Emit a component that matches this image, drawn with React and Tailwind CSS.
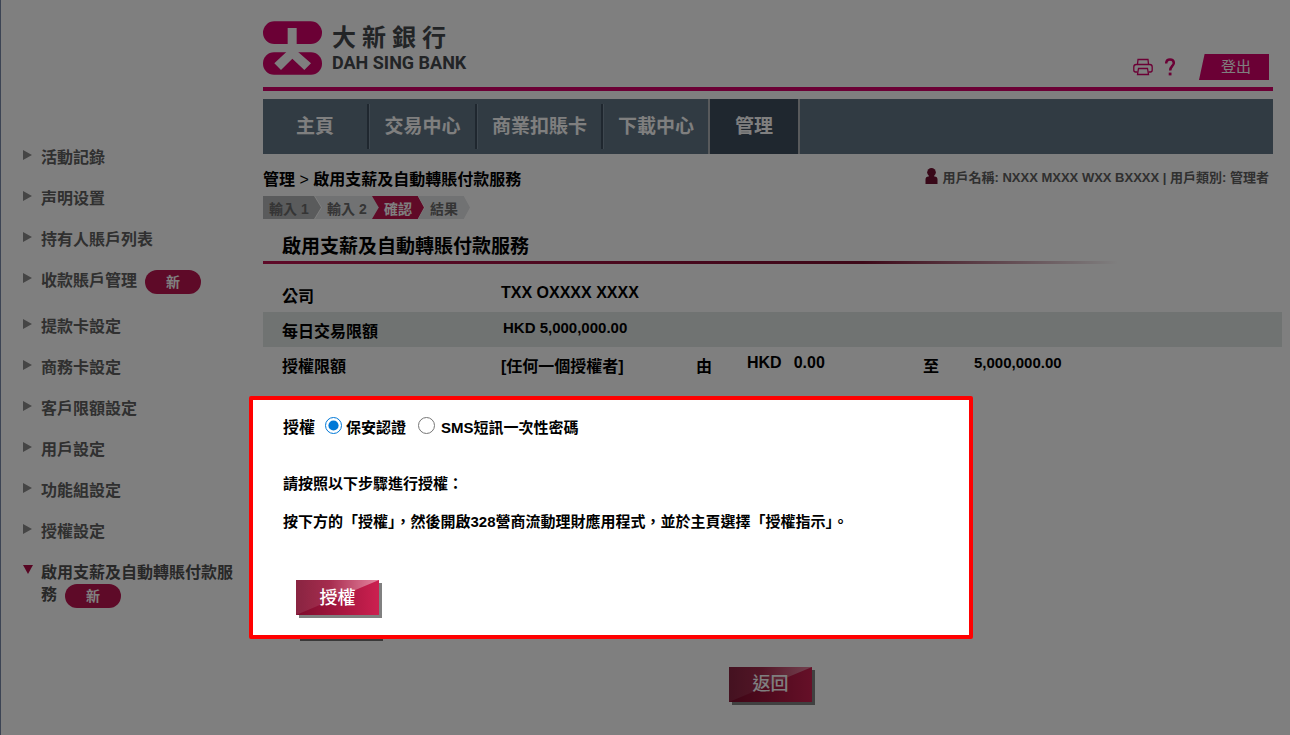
import React, { useState } from "react";
import clsx from "clsx";

const sideItems = [
  { label: "活動記錄" },
  { label: "声明设置" },
  { label: "持有人賬戶列表" },
  { label: "收款賬戶管理", isNew: true },
  { label: "提款卡設定" },
  { label: "商務卡設定" },
  { label: "客戶限額設定" },
  { label: "用戶設定" },
  { label: "功能組設定" },
  { label: "授權設定" },
  { label: "啟用支薪及自動轉賬付款服務", isNew: true, active: true },
];

const navItems = [
  { label: "主頁", width: "w-[107px]" },
  { label: "交易中心", width: "w-[108px]" },
  { label: "商業扣賬卡", width: "w-[126px]" },
  { label: "下載中心", width: "w-[104px]" },
  { label: "管理", width: "w-[88px]", active: true },
];

// ─── Logo ────────────────────────────────────────────────────────────────────
function Logo() {
  return (
    <div className="flex items-center gap-2.5 mb-[5px]">
      <svg viewBox="0 0 177 160" className="w-[59px] h-[54px]" aria-hidden="true">
        <rect width="177" height="68" rx="34" fill="#d6006a" />
        <rect y="93" width="177" height="67" rx="33" fill="#d6006a" />
        <path
          d="M74 20h27v68l43 38-20 20-36-34-34 34-20-20 40-38z"
          fill="#fff"
        />
      </svg>
      <div className="text-[#45484d]">
        <div className="flex gap-1.5 mt-0.5 text-[24px] leading-[28px] font-bold">
          <span>大</span>
          <span>新</span>
          <span>銀</span>
          <span>行</span>
        </div>
        <div className="font-[Roboto] font-bold text-[18px] leading-[22px]">
          DAH SING BANK
        </div>
      </div>
    </div>
  );
}

// ─── Header tools ────────────────────────────────────────────────────────────
function HeaderTools() {
  return (
    <div className="flex items-center mr-1">
      <button type="button" aria-label="列印" className="mr-3">
        <svg
          viewBox="0 0 20 18"
          className="w-5 h-[18px]"
          fill="none"
          stroke="#d6006a"
          strokeWidth="1.3"
        >
          <path d="M4.5 6.5 5 1.5h10l.5 5" />
          <path d="M4.5 14H2.6C1.500 14 .8 13.300.8 12V9c0-1.500.9-2.500 2.400-2.500h13.600c1.500 0 2.400 1 2.400 2.500v3c0 1.300-.7 2-1.800 2h-1.900" />
          <path d="M5.500 10.500h9l1 6h-11z" />
        </svg>
      </button>
      <button type="button" aria-label="說明" className="mr-6">
        <svg viewBox="0 0 10 18" className="w-2.5 h-[18px]" fill="none">
          <path
            d="M1.200 5.500C1.200 2.800 2.700 1.500 5 1.500S8.800 2.900 8.800 5C8.800 7.800 5.200 8.200 5.200 12.500"
            stroke="#d6006a"
            strokeWidth="2.500"
          />
          <rect x="3.700" y="14.600" width="2.800" height="2.800" fill="#d6006a" />
        </svg>
      </button>
      <button
        type="button"
        className="w-[70px] h-[26px] bg-[#d6006a] text-white text-[15px] leading-[26px] pl-1 [clip-path:polygon(8%_0,100%_0,100%_100%,0_100%)]"
      >
        登出
      </button>
    </div>
  );
}

// ─── Side menu ───────────────────────────────────────────────────────────────
function NewBadge() {
  return (
    <span className="inline-flex items-center justify-center w-14 h-6 -my-1 ml-2 align-middle rounded-full bg-[#bc1450] text-white text-[14px] leading-4">
      新
    </span>
  );
}

function SideMenu() {
  return (
    <aside className="w-[249px] shrink-0 border-l border-[#7888a8] pt-[147px] pl-[22px] pr-2.5">
      <ul className="flex flex-col gap-[19px]">
        {sideItems.map((item) => (
          <li
            key={item.label}
            className={clsx(
              "flex gap-2",
              item.isNew && !item.active && "mb-[5px]",
            )}
          >
            <svg viewBox="0 0 10 10" className="w-2.5 h-2.5 mt-[3px] shrink-0" aria-hidden="true">
              {item.active ? (
                <path d="M0 0h10L5 9z" fill="#b00c46" />
              ) : (
                <path d="M0 0v10l9-5z" fill="#8a8a8a" />
              )}
            </svg>
            <a
              href="#"
              className={clsx(
                "leading-[22px] text-base font-bold",
                item.active ? "text-[#505050]" : "text-[#606060]",
              )}
            >
              {item.label}
              {item.isNew && <NewBadge />}
            </a>
          </li>
        ))}
      </ul>
    </aside>
  );
}

// ─── Top navigation ──────────────────────────────────────────────────────────
function TopNav() {
  return (
    <nav className="flex items-stretch h-[55px] mt-2 bg-[#627686]">
      {navItems.map((item, i) => (
        <div
          key={item.label}
          className={clsx(
            "flex items-center justify-center",
            item.width,
            item.active && "bg-[#3e4e5e] border-x-2 border-[#b0b4b8] box-content",
          )}
        >
          <a href="#" className="flex-1 text-center text-[19px] leading-[28px] font-bold text-white">
            {item.label}
          </a>
          {i < 3 && (
            <span className="w-[3px] h-[45px] bg-[#3e4e5e] border-r border-[#7c8e9e]" />
          )}
        </div>
      ))}
    </nav>
  );
}

// ─── Progress steps ──────────────────────────────────────────────────────────
function Steps() {
  return (
    <ol className="flex h-[23px] mt-1 text-[14px] leading-[26px] font-bold text-[#6a6a6a]">
      <li className="relative z-1 w-[58px] pl-1.5 bg-[#b4b6b8] [clip-path:polygon(0_0,88%_0,100%_50%,88%_100%,0_100%)]">
        輸入 1
      </li>
      <li className="w-[63px] -ml-1.5 pl-3 bg-[#e2e4e6] [clip-path:polygon(0_0,100%_0,100%_100%,0_100%,11%_50%)]">
        輸入 2
      </li>
      <li className="w-[52px] -ml-1.5 pl-3 bg-[#c0144e] text-white [clip-path:polygon(0_0,88%_0,100%_50%,88%_100%,0_100%,13%_50%)]">
        確認
      </li>
      <li className="w-[52px] -ml-1.5 pl-3 bg-[#e2e4e6] [clip-path:polygon(0_0,88%_0,100%_50%,88%_100%,0_100%,13%_50%)]">
        結果
      </li>
    </ol>
  );
}

// ─── Details table ───────────────────────────────────────────────────────────
function DetailsTable() {
  const labelCell = "pl-[19px] pt-1 text-left align-middle font-bold text-base leading-[22px]";
  const textCell = "pt-1 align-middle text-base leading-[22px]";
  const valueCell = "pb-1 align-middle text-[15px] leading-[22px]";

  return (
    <table className="mt-[13px] w-full table-fixed border-collapse font-bold text-black">
      <colgroup>
        <col className="w-[238px]" />
        <col className="w-[195px]" />
        <col className="w-[51px]" />
        <col className="w-[176px]" />
        <col className="w-[51px]" />
        <col />
      </colgroup>
      <tbody>
        <tr className="h-[35px]">
          <th scope="row" className={labelCell}>公司</th>
          <td className="pb-1 align-middle text-base leading-[22px]" colSpan={5}>
            TXX OXXXX XXXX
          </td>
        </tr>
        <tr className="h-[35px] bg-[#e0e6e4]">
          <th scope="row" className={labelCell}>每日交易限額</th>
          <td className={clsx(valueCell, "pl-0.5")} colSpan={5}>HKD 5,000,000.00</td>
        </tr>
        <tr className="h-[35px]">
          <th scope="row" className={labelCell}>授權限額</th>
          <td className={textCell}>[任何一個授權者]</td>
          <td className={textCell}>由</td>
          <td className="pb-1 align-middle text-base leading-[22px]">
            <span className="mr-3">HKD</span>
            <span>0.00</span>
          </td>
          <td className={textCell}>至</td>
          <td className={valueCell}>5,000,000.00</td>
        </tr>
      </tbody>
    </table>
  );
}

function GlossButton({ children, className }) {
  return (
    <button
      type="button"
      className={clsx(
        "relative w-[83px] h-[35px] text-white text-[18px] font-medium bg-linear-to-r from-[#7c0c2c] to-[#cc2050] shadow-[3px_3px_0_#808080]",
        "before:absolute before:inset-0 before:bg-linear-to-r before:from-white/10 before:from-40% before:to-white/45 before:[clip-path:polygon(0_0,100%_0,0_100%)]",
        className,
      )}
    >
      <span className="relative">{children}</span>
    </button>
  );
}

// ─── Authorisation panel (stays above the dimmed page) ───────────────────────
function AuthPanel() {
  const [method, setMethod] = useState("token");

  return (
    <section className="relative z-20 max-w-[724px] mt-3.5 px-[30px] pt-4 pb-5 rounded-xs border-4 border-[#ff0000] bg-white text-black font-bold text-[15px] leading-6">
      <fieldset className="flex items-center">
        <legend className="float-left mr-2.5 text-base">授權</legend>
        <input
          id="auth-token"
          type="radio"
          name="auth"
          checked={method === "token"}
          onChange={() => setMethod("token")}
          className="w-[17px] h-[17px] mb-1.5 mr-1 accent-[#0078d7]"
        />
        <label htmlFor="auth-token" className="mr-3">保安認證</label>
        <input
          id="auth-sms"
          type="radio"
          name="auth"
          checked={method === "sms"}
          onChange={() => setMethod("sms")}
          className="w-[17px] h-[17px] mb-1.5 mr-1.5 accent-[#0078d7]"
        />
        <label htmlFor="auth-sms">SMS短訊一次性密碼</label>
      </fieldset>
      <p className="mt-8">請按照以下步驟進行授權：</p>
      <p className="mt-3.5">
        按下方的「授權」，然後開啟328營商流動理財應用程式，並於主頁選擇「授權指示」。
      </p>
      <GlossButton className="mt-[46px] ml-[13px]">授權</GlossButton>
    </section>
  );
}

// ─── Page ────────────────────────────────────────────────────────────────────
export default function App() {
  return (
    <div
      lang="zh-Hant"
      className="flex min-h-screen bg-white font-['Liberation_Sans','Noto_Sans_CJK_TC',sans-serif]"
    >
      <SideMenu />

      <main className="flex-1 min-w-0">
        <div className="pl-3.5 pr-[17px] pt-5">
          <header className="flex items-end justify-between h-[71px] pb-[7px] border-b-4 border-[#d6006a]">
            <Logo />
            <HeaderTools />
          </header>
          <TopNav />
          <div className="flex items-center justify-between h-6 mt-[14px] leading-5 font-bold">
            <div className="text-base text-black">
              管理 <span className="font-normal">&gt;</span> 啟用支薪及自動轉賬付款服務
            </div>
            <div className="flex items-center gap-1 mr-1 mb-1 text-[13px] text-[#606060]">
              <svg viewBox="0 0 13 16" className="w-[13px] h-4 mb-1" fill="#701030" aria-hidden="true">
                <circle cx="6.500" cy="4.300" r="4.300" />
                <path d="M.5 16v-4.500C.5 9.500 1.500 8.500 3.500 8.500L5 7h3l1.500 1.500c2 0 3 1 3 3V16z" />
              </svg>
              用戶名稱: NXXX MXXX WXX BXXXX | 用戶類別: 管理者
            </div>
          </div>
          <Steps />
        </div>

        <div className="pl-3.5 pr-2">
          <h1 className="mt-3.5 pl-[19px] text-[19px] leading-[28px] font-bold text-black">
            啟用支薪及自動轉賬付款服務
          </h1>
          <div className="w-[84%] h-[3px] bg-linear-to-r from-[#bc1450] via-[#7a1030] via-70% to-transparent" />
          <DetailsTable />
        </div>

        <AuthPanel />
        <div className="w-[83px] h-0.5 ml-[51px] bg-[#707070]" />

        <div className="mt-[26px] pl-[480px]">
          <GlossButton>返回</GlossButton>
        </div>
      </main>

      <div className="fixed inset-0 z-10 bg-black/50 pointer-events-none" />
    </div>
  );
}
